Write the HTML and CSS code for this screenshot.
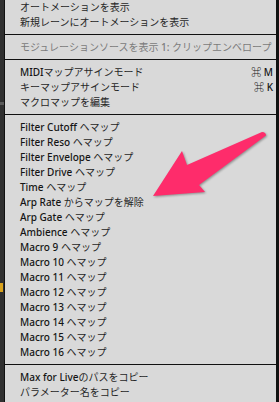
FILE: index.html
```html
<!DOCTYPE html>
<html>
<head>
<title>Context menu</title>
<link rel="stylesheet" href="styles.css">
</head>
<body>
	<div class="screen">
		<div class="behind">
			<span class="behind-bar"></span>
			<span class="behind-tag"></span>
		</div>
		<ul class="menu">
			<li class="item">オートメーションを表示</li>
			<li class="item">新規レーンにオートメーションを表示</li>
			<li class="sep"></li>
			<li class="item disabled">モジュレーションソースを表示 <span class="en">1:</span> クリップエンベロープ</li>
			<li class="sep"></li>
			<li class="item"><span class="key">⌘ M</span><span class="en">MIDI</span>マップアサインモード</li>
			<li class="item"><span class="key">⌘ K</span>キーマップアサインモード</li>
			<li class="item">マクロマップを編集</li>
			<li class="sep"></li>
			<li class="item"><span class="en">Filter Cutoff</span> ヘマップ</li>
			<li class="item"><span class="en">Filter Reso</span> ヘマップ</li>
			<li class="item"><span class="en">Filter Envelope</span> ヘマップ</li>
			<li class="item"><span class="en">Filter Drive</span> ヘマップ</li>
			<li class="item"><span class="en">Time</span> ヘマップ</li>
			<li class="item"><span class="en">Arp Rate</span> からマップを解除</li>
			<li class="item"><span class="en">Arp Gate</span> ヘマップ</li>
			<li class="item"><span class="en">Ambience</span> ヘマップ</li>
			<li class="item"><span class="en">Macro 9</span> ヘマップ</li>
			<li class="item"><span class="en">Macro 10</span> ヘマップ</li>
			<li class="item"><span class="en">Macro 11</span> ヘマップ</li>
			<li class="item"><span class="en">Macro 12</span> ヘマップ</li>
			<li class="item"><span class="en">Macro 13</span> ヘマップ</li>
			<li class="item"><span class="en">Macro 14</span> ヘマップ</li>
			<li class="item"><span class="en">Macro 15</span> ヘマップ</li>
			<li class="item"><span class="en">Macro 16</span> ヘマップ</li>
			<li class="sep"></li>
			<li class="item"><span class="en">Max for Live</span>のパスをコピー</li>
			<li class="item">パラメーター名をコピー</li>
		</ul>
		<svg class="arrow" width="279" height="402" viewBox="0 0 279 402">
			<path d="M262 132 Q266 132 266 135.5 L199 185 L205 192 L153 196 L182 151 L187 165 Z" fill="#fe2c6b"/>
		</svg>
	</div>
</body>
</html>
```

FILE: styles.css
```css
body {
	margin: 0;
	background-color: #2c2c2c;
	font-family: "Noto Sans", "Noto Sans CJK JP", sans-serif;
	font-size: 10px;
	overflow: hidden;
}
.screen {
	position: relative;
	display: flex;
	height: 402px;
	width: 279px;
}
.behind {
	position: relative;
	width: 4px;
	background-color: #303030;
}
.behind-bar {
	position: absolute;
	left: 0;
	top: 102px;
	width: 4px;
	height: 3px;
	background-color: #5a5a5a;
}
.behind-tag {
	position: absolute;
	left: 0;
	top: 283px;
	width: 3px;
	height: 9px;
	background-color: #d9a21c;
}
.menu {
	flex: 1;
	list-style: none;
	margin: 0;
	padding: 0;
	background-color: #d9d9d9;
	border-left: 1px solid #111;
	border-right: 3px solid #111;
	color: #262626;
}
.item {
	height: 15px;
	line-height: 15px;
	padding: 0 3px 0 15px;
	white-space: nowrap;
}
.en {
	font-weight: 500;
	color: #151515;
}
.disabled,
.disabled .en {
	color: #7b7b7b;
}
.key {
	float: right;
	font-weight: 500;
	color: #151515;
}
.sep {
	height: 1px;
	background-color: #111;
	margin: 4px 0 5px 0;
}
.arrow {
	position: absolute;
	left: 0;
	top: 0;
	pointer-events: none;
	filter: drop-shadow(1px 1px 1px rgba(0,0,0,0.35));
}
```
